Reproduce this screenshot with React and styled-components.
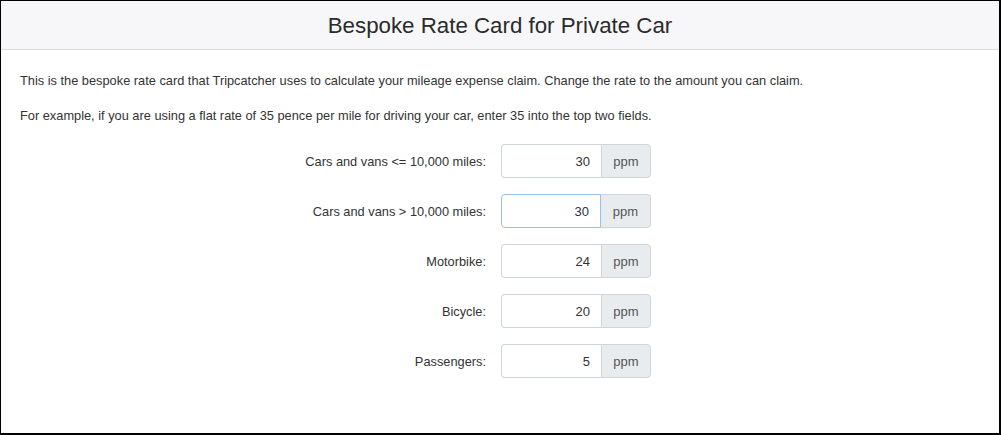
import React from 'react';
import styled, { createGlobalStyle } from 'styled-components';

const GlobalStyle = createGlobalStyle`
  html, body {
    margin: 0;
    padding: 0;
    background: #fff;
  }
  body {
    font-family: "Liberation Sans", Arial, Helvetica, sans-serif;
    color: #333;
  }
`;

const Frame = styled.div`
  box-sizing: border-box;
  width: 1001px;
  height: 435px;
  border: 1px solid #000;
  border-right-width: 2px;
  border-bottom-width: 2px;
  display: flex;
  flex-direction: column;
  overflow: hidden;
`;

const Header = styled.header`
  height: 48px;
  background: #f7f7f9;
  border-bottom: 1px solid #dcdcdc;
  display: flex;
  align-items: center;
  justify-content: center;
`;

const Title = styled.h1`
  margin: 0;
  font-size: 22.3px;
  font-weight: 400;
  color: #2b2b2b;
  padding-top: 2px;
`;

const Body = styled.div`
  padding: 21px 19px 0;
`;

const Text = styled.p`
  margin: 0 0 16px;
  font-size: 12.8px;
  line-height: 19px;
`;

const Form = styled.form`
  margin-top: 19px;
  display: flex;
  flex-direction: column;
  gap: 16px;
`;

const Row = styled.div`
  display: flex;
  align-items: center;
`;

const Label = styled.label`
  width: 466px;
  padding-right: 15px;
  text-align: right;
  font-size: 12.8px;
  color: #333;
`;

const Group = styled.div`
  display: flex;
  width: 150px;
  height: 34px;
`;

const Input = styled.input`
  box-sizing: border-box;
  width: 100px;
  height: 34px;
  margin: 0;
  padding: 0 11px;
  text-align: right;
  font-family: inherit;
  font-size: 13px;
  color: #333;
  background: #fff;
  border: 1px solid ${({ $active }) => ($active ? '#93c4ec' : '#cfd4da')};
  border-right: none;
  border-radius: 4px 0 0 4px;
  outline: none;
  ${({ $active }) => $active && 'border-right: 1px solid #93c4ec;'}
`;

const Addon = styled.span`
  box-sizing: border-box;
  flex: 1;
  display: flex;
  align-items: center;
  justify-content: center;
  font-size: 13px;
  color: #555;
  background: #e9ecef;
  border: 1px solid #cfd4da;
  border-left: ${({ $joined }) => ($joined ? 'none' : '1px solid #cfd4da')};
  border-radius: 0 4px 4px 0;
`;

const rates = [
  { label: 'Cars and vans <= 10,000 miles:', value: '30' },
  { label: 'Cars and vans > 10,000 miles:', value: '30', active: true },
  { label: 'Motorbike:', value: '24' },
  { label: 'Bicycle:', value: '20' },
  { label: 'Passengers:', value: '5' },
];

export default function App() {
  return (
    <>
      <GlobalStyle />
      <Frame>
        <Header>
          <Title>Bespoke Rate Card for Private Car</Title>
        </Header>
        <Body>
          <Text>
            This is the bespoke rate card that Tripcatcher uses to calculate your mileage expense claim. Change the rate to the amount you can claim.
          </Text>
          <Text>
            For example, if you are using a flat rate of 35 pence per mile for driving your car, enter 35 into the top two fields.
          </Text>
          <Form onSubmit={(e) => e.preventDefault()}>
            {rates.map((r) => (
              <Row key={r.label}>
                <Label>{r.label}</Label>
                <Group>
                  <Input $active={r.active} defaultValue={r.value} />
                  <Addon $joined={r.active}>ppm</Addon>
                </Group>
              </Row>
            ))}
          </Form>
        </Body>
      </Frame>
    </>
  );
}
